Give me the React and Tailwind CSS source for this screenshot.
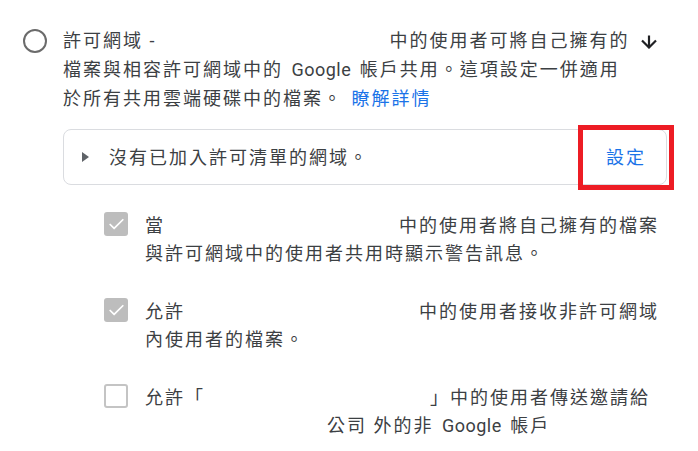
import { Check } from 'lucide-react'

const FONT = 'font-[Roboto,"Noto_Sans_CJK_TC",sans-serif]'

function Gap({ className }) {
  return <span className={`inline-block ${className}`} />
}

function ArrowDown() {
  return (
    <svg width="18" height="14" viewBox="0 0 18 14" fill="none" stroke="#202124" strokeWidth="2.2">
      <path d="M9 0.5v12" />
      <path d="M2 5.5l7 7 7-7" />
    </svg>
  )
}

function Box({ checked }) {
  if (checked) {
    return (
      <span className="flex items-center justify-center w-6 h-6 rounded-[3px] bg-[#bdbdbd] shrink-0">
        <Check size={19} strokeWidth={2.2} className="text-white" />
      </span>
    )
  }
  return <span className="w-6 h-6 rounded-[3px] border-2 border-[#c4c4c4] shrink-0" />
}

function Option({ checked, children }) {
  return (
    <div className="flex items-start gap-[17px]">
      <Box checked={checked} />
      <p className="leading-[28px] whitespace-nowrap">{children}</p>
    </div>
  )
}

export default function App() {
  return (
    <div className={`w-[698px] h-[451px] overflow-hidden bg-white text-[18px] tracking-[2px] text-[#3c4043] ${FONT}`}>
      <div className="flex pt-[26px] pl-[23px]">
        <span className="mt-[3px] w-6 h-6 rounded-full border-2 border-[#6b6b6b] shrink-0" />
        <div className="ml-4 w-[604px]">
          <div className="flex items-start">
            <p className="flex-1 leading-[29px] whitespace-nowrap">
              許可網域 -<Gap className="w-[233px]" />中的使用者可將自己擁有的
              <br />
              檔案與相容許可網域中的 <span className="px-[2px] tracking-[0.5px]">Google</span> 帳戶共用。這項設定一併適用
              <br />
              於所有共用雲端硬碟中的檔案。 <a className="ml-[2px] text-[#1a73e8]">瞭解詳情</a>
            </p>
            <span className="mt-[9px] mr-[9px]">
              <ArrowDown />
            </span>
          </div>

          <div className="relative mt-4 h-14 flex items-center border border-[#dadce0] rounded-lg pl-[18px] pr-5">
            <span className="w-0 h-0 border-y-[5px] border-y-transparent border-l-[7px] border-l-[#5f6368]" />
            <span className="ml-5 flex-1">沒有已加入許可清單的網域。</span>
            <button className="text-[#1a73e8]">設定</button>
            <div className="absolute -top-[5px] left-[514px] w-[96px] h-[65px] border-[5px] border-[#ed1c24]" />
          </div>

          <div className="mt-[27px] pl-[41px] flex flex-col gap-[30px]">
            <Option checked>
              當<Gap className="w-[234px]" />中的使用者將自己擁有的檔案
              <br />
              與許可網域中的使用者共用時顯示警告訊息。
            </Option>
            <Option checked>
              允許<Gap className="w-[234px]" />中的使用者接收非許可網域
              <br />
              內使用者的檔案。
            </Option>
            <Option>
              允許「<Gap className="w-[225px]" />」中的使用者傳送邀請給
              <br />
              <Gap className="w-[182px]" />公司 外的非 <span className="px-[2px] tracking-[0.5px]">Google</span> 帳戶
            </Option>
          </div>
        </div>
      </div>
    </div>
  )
}
